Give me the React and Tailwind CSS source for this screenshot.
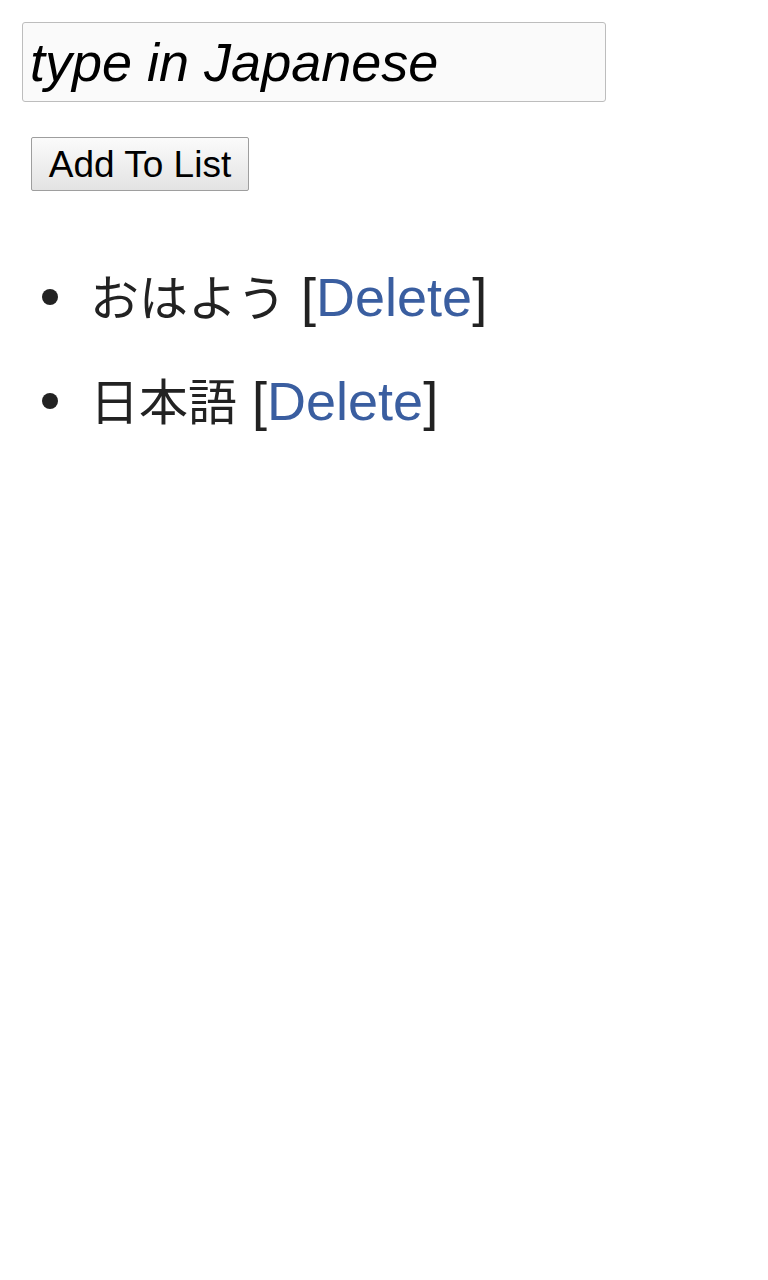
export default function App() {
  const items = ["おはよう", "日本語"];
  return (
    <div className="bg-white min-h-[1280px] text-[#222]" style={{ fontFamily: '"Liberation Sans", "Noto Sans CJK JP", sans-serif' }}>
      <div className="pt-[22px] pl-[22px]">
        <input
          className="block w-[584px] h-[80px] border border-[#bdbdbd] rounded-[3px] bg-[#fafafa] px-[7px] pt-[1px] text-[54px] italic text-black outline-none"
          defaultValue="type in Japanese"
        />
        <button className="mt-[35px] ml-[9px] w-[218px] h-[54px] border border-[#9e9e9e] rounded-[2px] bg-gradient-to-b from-[#fbfbfb] to-[#e3e3e3] text-[37px] text-black leading-none">
          Add To List
        </button>
      </div>
      <ul className="mt-[54px] flex flex-col">
        {items.map((t) => (
          <li key={t} className="h-[104px] flex items-center">
            <span className="ml-[42px] w-[16px] h-[16px] rounded-full bg-[#222]" />
            <div className="ml-[32px] leading-none whitespace-nowrap">
              <span className="text-[49px]" style={{ fontFamily: '"Noto Sans CJK JP", sans-serif' }}>{t}</span>
              <span className="text-[54px]">
                {" "}[<a className="text-[#3a5ea0]" href="#">Delete</a>]
              </span>
            </div>
          </li>
        ))}
      </ul>
    </div>
  );
}
